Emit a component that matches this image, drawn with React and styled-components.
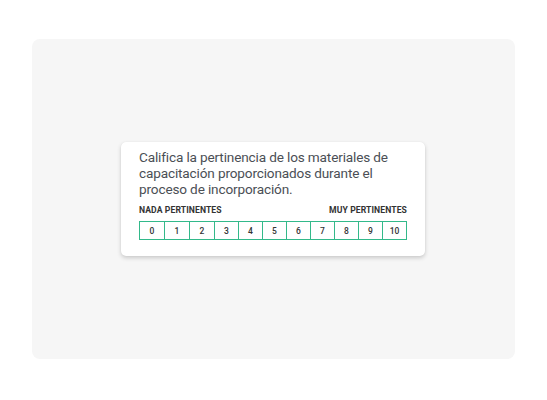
import React from 'react';
import styled, { createGlobalStyle } from 'styled-components';

const GlobalStyle = createGlobalStyle`
  html, body {
    margin: 0;
    padding: 0;
    background: #ffffff;
  }
  body {
    font-family: Roboto, "Liberation Sans", sans-serif;
  }
`;

const Page = styled.div`
  width: 547px;
  height: 400px;
  padding: 39px 32px 41px 32px;
  box-sizing: border-box;
`;

const Panel = styled.div`
  height: 100%;
  background: #f6f6f6;
  border-radius: 8px;
  display: flex;
  align-items: center;
  justify-content: center;
  padding-left: 89px;
  padding-right: 90px;
  box-sizing: border-box;
`;

const Card = styled.div`
  width: 304px;
  box-sizing: border-box;
  padding: 7px 18px 16px 18px;
  background: #fff;
  border-radius: 5px;
  box-shadow: 0 2px 4px rgba(0, 0, 0, 0.18), 0 0 1px rgba(0, 0, 0, 0.08);
`;

const Question = styled.p`
  margin: 0;
  font-size: 13.6px;
  line-height: 16px;
  color: #4b4f55;
  letter-spacing: -0.15px;
`;

const Labels = styled.div`
  display: flex;
  justify-content: space-between;
  height: 12px;
  align-items: center;
  margin-top: 7px;
  font-size: 8.6px;
  font-weight: 700;
  color: #333;
  letter-spacing: 0.1px;
`;

const Scale = styled.div`
  display: grid;
  grid-template-columns: repeat(3, 24px) repeat(8, 23px);
  gap: 1px;
  margin-top: 5px;
  padding: 1px;
  height: 19px;
  box-sizing: border-box;
  background: #33b98a;
`;

const Cell = styled.div`
  display: flex;
  align-items: center;
  justify-content: center;
  background: #fff;
  font-size: 8.5px;
  font-weight: 500;
  color: #333;
`;

export default function App() {
  const values = Array.from({ length: 11 }, (_, i) => i);
  return (
    <>
      <GlobalStyle />
      <Page>
        <Panel>
          <Card>
            <Question>
              Califica la pertinencia de los materiales de capacitación proporcionados durante el proceso de incorporación.
            </Question>
            <Labels>
              <span>NADA PERTINENTES</span>
              <span>MUY PERTINENTES</span>
            </Labels>
            <Scale>
              {values.map((v) => (
                <Cell key={v}>{v}</Cell>
              ))}
            </Scale>
          </Card>
        </Panel>
      </Page>
    </>
  );
}
